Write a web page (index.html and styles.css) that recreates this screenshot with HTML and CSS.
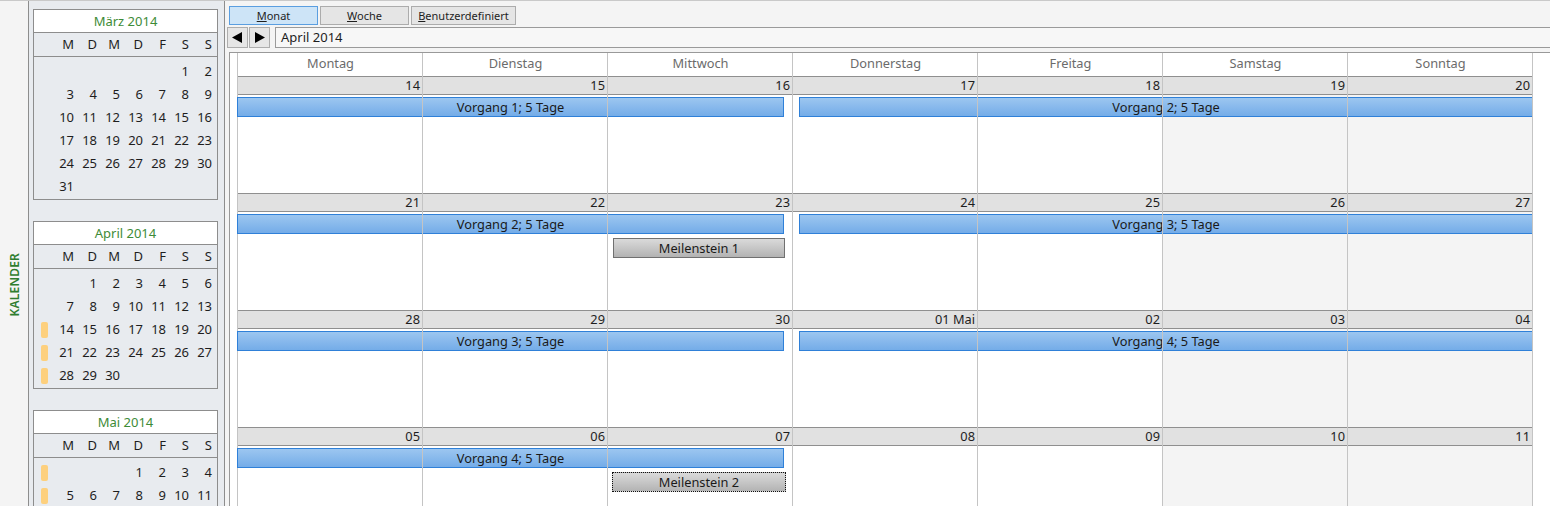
FILE: index.html
```html
<!DOCTYPE html>
<html lang="de">

<head>
    <meta charset="UTF-8">
    <meta name="viewport" content="width=device-width, initial-scale=1.0">
    <title>Kalender</title>
    <link rel="stylesheet" href="styles.css">
</head>

<body>
    <!-- collapsed pane tab -->
    <div class="strip"><span class="strip-label">KALENDER</span></div>

    <!-- month overview -->
    <aside class="sidebar">
        <div class="mini">
            <div class="mini-title">März 2014</div>
            <div class="mini-head"><span></span><span>M</span><span>D</span><span>M</span><span>D</span><span>F</span><span>S</span><span>S</span></div>
            <div class="mini-body">
                <span></span><span></span><span></span><span></span><span></span><span></span><span>1</span><span>2</span>
                <span></span><span>3</span><span>4</span><span>5</span><span>6</span><span>7</span><span>8</span><span>9</span>
                <span></span><span>10</span><span>11</span><span>12</span><span>13</span><span>14</span><span>15</span><span>16</span>
                <span></span><span>17</span><span>18</span><span>19</span><span>20</span><span>21</span><span>22</span><span>23</span>
                <span></span><span>24</span><span>25</span><span>26</span><span>27</span><span>28</span><span>29</span><span>30</span>
                <span></span><span>31</span>
            </div>
        </div>

        <div class="mini">
            <div class="mini-title">April 2014</div>
            <div class="mini-head"><span></span><span>M</span><span>D</span><span>M</span><span>D</span><span>F</span><span>S</span><span>S</span></div>
            <div class="mini-body">
                <span></span><span></span><span>1</span><span>2</span><span>3</span><span>4</span><span>5</span><span>6</span>
                <span></span><span>7</span><span>8</span><span>9</span><span>10</span><span>11</span><span>12</span><span>13</span>
                <span><i class="mark"></i></span><span>14</span><span>15</span><span>16</span><span>17</span><span>18</span><span>19</span><span>20</span>
                <span><i class="mark"></i></span><span>21</span><span>22</span><span>23</span><span>24</span><span>25</span><span>26</span><span>27</span>
                <span><i class="mark"></i></span><span>28</span><span>29</span><span>30</span>
            </div>
        </div>

        <div class="mini">
            <div class="mini-title">Mai 2014</div>
            <div class="mini-head"><span></span><span>M</span><span>D</span><span>M</span><span>D</span><span>F</span><span>S</span><span>S</span></div>
            <div class="mini-body">
                <span><i class="mark"></i></span><span></span><span></span><span></span><span>1</span><span>2</span><span>3</span><span>4</span>
                <span><i class="mark"></i></span><span>5</span><span>6</span><span>7</span><span>8</span><span>9</span><span>10</span><span>11</span>
            </div>
        </div>
    </aside>

    <main class="main">
        <div class="tabs">
            <button class="tab active"><u>M</u>onat</button>
            <button class="tab"><u>W</u>oche</button>
            <button class="tab wide"><u>B</u>enutzerdefiniert</button>
        </div>

        <div class="nav">
            <button class="navbtn"><svg width="11" height="11" viewBox="0 0 11 11"><polygon points="10,0 10,11 0,5.5" fill="#000" /></svg></button>
            <button class="navbtn"><svg width="11" height="11" viewBox="0 0 11 11"><polygon points="1,0 1,11 11,5.5" fill="#000" /></svg></button>
            <div class="period">April 2014</div>
        </div>

        <div class="board">
            <div class="cal">
                <div class="daynames">
                    <span>Montag</span><span>Dienstag</span><span>Mittwoch</span><span>Donnerstag</span><span>Freitag</span><span>Samstag</span><span>Sonntag</span>
                </div>

                <div class="week">
                    <div class="dates"><span>14</span><span>15</span><span>16</span><span>17</span><span>18</span><span>19</span><span>20</span></div>
                    <div class="wbody">
                        <div class="task first">Vorgang 1; 5 Tage</div>
                        <div class="task second">Vorgang 2; 5 Tage</div>
                    </div>
                </div>

                <div class="week">
                    <div class="dates"><span>21</span><span>22</span><span>23</span><span>24</span><span>25</span><span>26</span><span>27</span></div>
                    <div class="wbody">
                        <div class="task first">Vorgang 2; 5 Tage</div>
                        <div class="task second">Vorgang 3; 5 Tage</div>
                        <div class="milestone">Meilenstein 1</div>
                    </div>
                </div>

                <div class="week">
                    <div class="dates"><span>28</span><span>29</span><span>30</span><span>01 Mai</span><span>02</span><span>03</span><span>04</span></div>
                    <div class="wbody">
                        <div class="task first">Vorgang 3; 5 Tage</div>
                        <div class="task second">Vorgang 4; 5 Tage</div>
                    </div>
                </div>

                <div class="week">
                    <div class="dates"><span>05</span><span>06</span><span>07</span><span>08</span><span>09</span><span>10</span><span>11</span></div>
                    <div class="wbody">
                        <div class="task first">Vorgang 4; 5 Tage</div>
                        <div class="milestone focused">Meilenstein 2</div>
                    </div>
                </div>
            </div>
        </div>
    </main>
</body>

</html>
```

FILE: styles.css
```css
* {
    margin: 0;
    padding: 0;
    box-sizing: border-box;
}

html,
body {
    height: 100%;
}

body {
    display: flex;
    overflow: hidden;
    background-color: #f4f4f4;
    border-top: 1px solid #c9c9c9;
    font-family: "Noto Sans", "Open Sans", sans-serif;
    font-size: 12.8px;
    color: #1e1e1e;
}

/* left pane tab */
.strip {
    flex: none;
    width: 29px;
    padding-top: 62px;
    border-right: 1px solid #8d8d8d;
    display: flex;
    align-items: center;
    justify-content: center;
}

.strip-label {
    writing-mode: vertical-rl;
    transform: rotate(180deg);
    color: #2f7d2f;
    font-size: 12px;
    font-weight: 600;
    letter-spacing: 0.2px;
}

/* month overview */
.sidebar {
    flex: none;
    width: 196px;
    padding: 8px 0 0 4px;
    background-color: #e8ebef;
    border-right: 1px solid #8d8d8d;
    overflow: hidden;
}

.mini {
    width: 185px;
    margin-bottom: 21px;
    border: 1px solid #8d8d8d;
}

.mini-title {
    height: 23px;
    line-height: 22px;
    text-align: center;
    font-size: 13px;
    color: #3d8b37;
    background-color: #fff;
    border-bottom: 1px solid #8d8d8d;
}

.mini-head,
.mini-body {
    display: grid;
    grid-template-columns: 18px repeat(7, 23px);
    font-size: 13px;
    text-align: right;
}

.mini-head {
    height: 24px;
    line-height: 23px;
    border-bottom: 1px solid #8d8d8d;
}

.mini-body {
    grid-auto-rows: 23px;
    line-height: 23px;
    padding: 3px 0 1px;
}

.mini-head span,
.mini-body span {
    padding-right: 1px;
}

.mark {
    display: block;
    width: 7px;
    height: 16px;
    margin: 4px 0 0 7px;
    border-radius: 2px;
    background-color: #fdd07e;
}

/* main view */
.main {
    flex: 1;
    display: flex;
    flex-direction: column;
    padding-left: 4px;
    min-width: 0;
}

.tabs {
    flex: none;
    display: flex;
    gap: 2px;
    height: 26px;
    padding-top: 5px;
}

.tab {
    width: 89px;
    height: 19px;
    border: 1px solid #acacac;
    background-color: #e5e5e5;
    font-family: inherit;
    font-size: 11px;
    line-height: 16px;
    color: #1e1e1e;
}

.tab.wide {
    width: 105px;
}

.tab.active {
    background-color: #cde4f7;
    border-color: #5a9ee0;
}

.nav {
    flex: none;
    display: flex;
    height: 21px;
    margin-left: -2px;
}

.navbtn {
    width: 21px;
    height: 21px;
    margin-right: 1px;
    border: 1px solid #adadad;
    background-color: #e6e6e6;
    display: flex;
    align-items: center;
    justify-content: center;
}

.period {
    flex: 1;
    margin-left: 4px;
    padding-left: 5px;
    border: 1px solid #9a9a9a;
    border-right: 0;
    background-color: #f7f7f7;
    font-size: 13px;
    line-height: 19px;
}

.board {
    flex: none;
    margin-top: 4px;
    padding-left: 7px;
    background-color: #fff;
    border-top: 1px solid #999;
    border-left: 1px solid #999;
}

.cal {
    position: relative;
    width: 1296px;
    border-left: 1px solid #c4c4c4;
}

/* column lines lie over the bars, like the original control */
.cal::after {
    content: "";
    position: absolute;
    top: 0;
    left: 0;
    right: 0;
    bottom: 0;
    pointer-events: none;
    background: repeating-linear-gradient(to right, transparent 0 184px, #c4c4c4 184px 185px);
}

.daynames,
.dates,
.wbody {
    display: grid;
    grid-template-columns: repeat(7, 185px);
}

.daynames {
    height: 23px;
    line-height: 20px;
    text-align: center;
    color: #6b6b6b;
}

.dates {
    height: 19px;
    line-height: 17px;
    text-align: right;
    background-color: #e1e1e1;
    border-top: 1px solid #8f8f8f;
    border-bottom: 1px solid #8f8f8f;
}

.dates span {
    padding-right: 3px;
}

.wbody {
    height: 98px;
    padding-top: 2px;
    grid-template-rows: 20px 20px;
    row-gap: 4px;
    background: linear-gradient(to right, #fff 0 925px, #f4f4f4 925px);
}

.task {
    grid-row: 1;
    height: 20px;
    line-height: 18px;
    text-align: center;
    color: #1a1a1a;
    border: 1px solid #2f80d8;
    background: linear-gradient(#9cc6f0, #74ace8);
}

.task.first {
    grid-column: 1 / 4;
    margin: 0 9px 0 -1px;
}

.task.second {
    grid-column: 4 / 8;
    margin-left: 6px;
}

.milestone {
    grid-row: 2;
    grid-column: 3 / 4;
    height: 20px;
    margin: 0 8px 0 5px;
    line-height: 18px;
    text-align: center;
    color: #1a1a1a;
    border: 1px solid #707070;
    background: linear-gradient(#dadada, #b3b3b3);
}

.milestone.focused {
    margin: 0 7px 0 4px;
    border: 1px dotted #111;
}
```
